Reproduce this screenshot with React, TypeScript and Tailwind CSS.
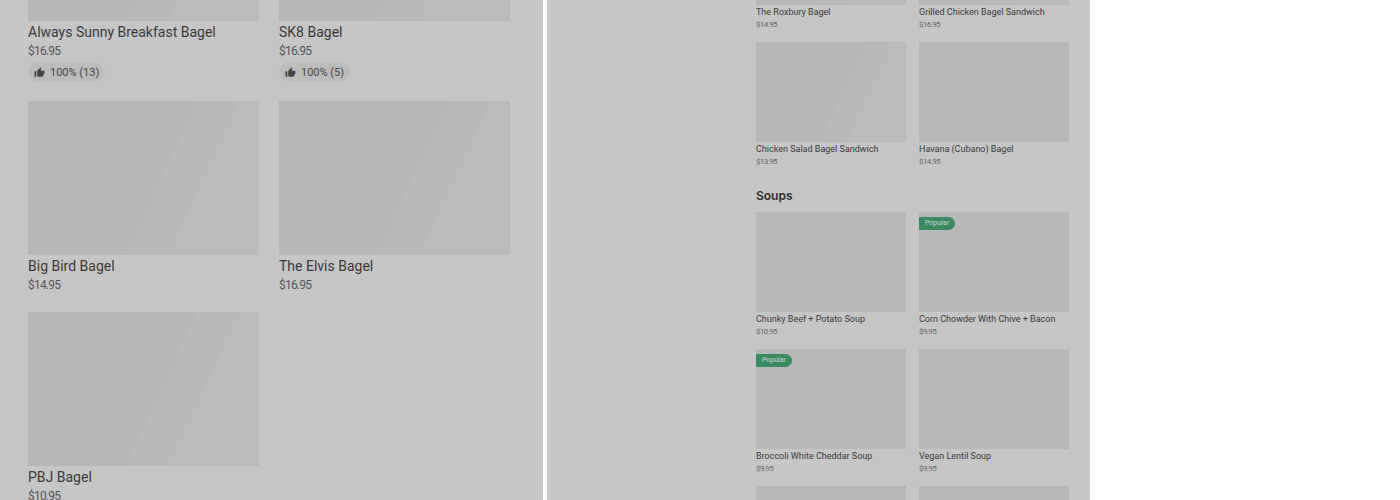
import React from 'react';
import { MdThumbUp } from 'react-icons/md';

const FONT = "font-['Roboto','Liberation_Sans',sans-serif]";

// placeholder shimmer, the diagonal band shows on some of the tiles
const SHIMMER =
  'bg-[linear-gradient(115deg,#b7b7b7_56%,#b9b9b9_56%,#b9b9b9_70%,#bbbbbb_70%)]';

interface LargeItem {
  name: string;
  price: string;
  rating?: string;
}

const largeItems: LargeItem[] = [
  { name: 'Always Sunny Breakfast Bagel', price: '$16.95', rating: '100% (13)' },
  { name: 'SK8 Bagel', price: '$16.95', rating: '100% (5)' },
  { name: 'Big Bird Bagel', price: '$14.95' },
  { name: 'The Elvis Bagel', price: '$16.95' },
  { name: 'PBJ Bagel', price: '$10.95' },
];

interface SmallItem {
  name: string;
  price: string;
  popular?: boolean;
  shimmer?: boolean;
}

const bagels: SmallItem[] = [
  { name: 'The Roxbury Bagel', price: '$14.95', shimmer: true },
  { name: 'Grilled Chicken Bagel Sandwich', price: '$16.95', shimmer: true },
  { name: 'Chicken Salad Bagel Sandwich', price: '$13.95', shimmer: true },
  { name: 'Havana (Cubano) Bagel', price: '$14.95' },
];

const soups: SmallItem[] = [
  { name: 'Chunky Beef + Potato Soup', price: '$10.95' },
  { name: 'Corn Chowder With Chive + Bacon', price: '$9.95', popular: true },
  { name: 'Broccoli White Cheddar Soup', price: '$9.95', popular: true },
  { name: 'Vegan Lentil Soup', price: '$9.95' },
  { name: '', price: '' },
  { name: '', price: '' },
];

const LargeCard: React.FC<{ item: LargeItem }> = ({ item }) => (
  <div>
    <div className={`h-[154px] ${SHIMMER}`} />
    <div className="mt-px h-5 text-[14px] leading-5 text-[#3a3a3a] whitespace-nowrap">{item.name}</div>
    <div className="h-[18px] text-[12px] leading-[18px] tracking-[-0.8px] text-[#555555]">{item.price}</div>
    {item.rating && (
      <div className="mt-[3px] mb-0.5 flex h-[18px] w-fit items-center gap-[5px] rounded-full bg-[#bcbcbc] pl-[6px] pr-[6px] text-[#444444]">
        <MdThumbUp size={11} />
        <span className="text-[11px] leading-none">{item.rating}</span>
      </div>
    )}
  </div>
);

const SmallCard: React.FC<{ item: SmallItem }> = ({ item }) => (
  <div>
    <div className={`relative h-[100px] ${item.shimmer ? SHIMMER : 'bg-[#b8b8b8]'}`}>
      {item.popular && (
        <span className="absolute left-0 top-[5px] flex h-[13px] w-9 items-center justify-center rounded-r-full bg-[#3a8a62] text-[7px] text-[#c4d6cc]">
          Popular
        </span>
      )}
    </div>
    <div className="mt-px h-[13px] text-[9px] leading-[13px] text-[#3a3a3a] whitespace-nowrap">{item.name}</div>
    <div className="h-[11px] text-[8px] leading-[11px] tracking-[-0.6px] text-[#666666]">{item.price}</div>
  </div>
);

export default function App() {
  return (
    <div className={`flex h-[500px] w-[1400px] overflow-hidden bg-white ${FONT}`}>
      <div className="h-full w-[543px] overflow-hidden bg-[#c6c6c6] pl-7">
        <div className="-mt-[133px] grid w-[482px] grid-cols-2 gap-x-5 gap-y-[18px]">
          {largeItems.map((item) => (
            <LargeCard key={item.name} item={item} />
          ))}
        </div>
      </div>
      <div className="ml-1 h-full w-[543px] overflow-hidden bg-[#c6c6c6] pl-[209px]">
        <div className="-mt-[95px] grid w-[313px] grid-cols-2 gap-x-[13px] gap-y-3">
          {bagels.map((item) => (
            <SmallCard key={item.name} item={item} />
          ))}
        </div>
        <h2 className="mt-5 mb-2 h-[17px] font-['Inter',sans-serif] text-[12px] leading-[17px] font-semibold text-[#2e2e2e]">Soups</h2>
        <div className="grid w-[313px] grid-cols-2 gap-x-[13px] gap-y-3">
          {soups.map((item, i) => (
            <SmallCard key={`${item.name}-${i}`} item={item} />
          ))}
        </div>
      </div>
    </div>
  );
}
